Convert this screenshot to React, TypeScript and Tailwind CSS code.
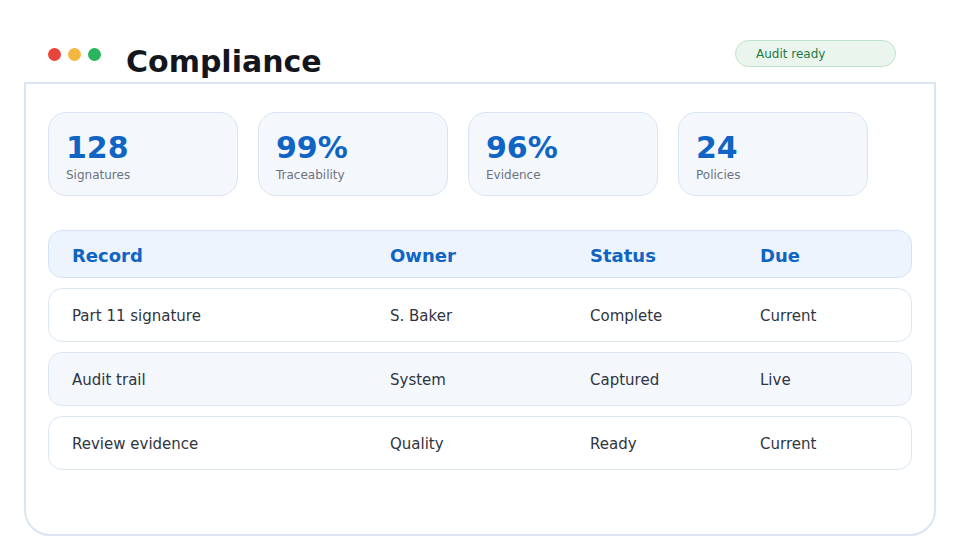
const stats = [
  { value: '128', label: 'Signatures' },
  { value: '99%', label: 'Traceability' },
  { value: '96%', label: 'Evidence' },
  { value: '24', label: 'Policies' },
];

const rows = [
  { record: 'Part 11 signature', owner: 'S. Baker', status: 'Complete', due: 'Current' },
  { record: 'Audit trail', owner: 'System', status: 'Captured', due: 'Live' },
  { record: 'Review evidence', owner: 'Quality', status: 'Ready', due: 'Current' },
];

const cols = 'grid grid-cols-[318px_200px_170px_1fr] items-center';

export default function App() {
  return (
    <div className="h-[560px] w-[960px] bg-white font-['DejaVu_Sans',sans-serif]">
      <header className="flex h-[82px] items-start pr-[64px] pl-[48px]">
        <div className="mt-[48px] flex gap-[7px]">
          <span className="h-[13px] w-[13px] rounded-full bg-[#e8463a]" />
          <span className="h-[13px] w-[13px] rounded-full bg-[#f4b63f]" />
          <span className="h-[13px] w-[13px] rounded-full bg-[#2ab45d]" />
        </div>
        <h1 className="mt-[47px] ml-[25px] text-[30px] leading-[30px] font-bold text-[#13171d]">
          Compliance
        </h1>
        <div className="mt-[40px] ml-auto flex h-[27px] w-[161px] items-center rounded-full border border-[#bde3c9] bg-[#eaf5ee] pl-[20px] text-[12px] text-[#1d7a45]">
          Audit ready
        </div>
      </header>

      <main className="mx-[24px] h-[454px] rounded-b-[26px] border-2 border-[#dae5f1] px-[22px] pt-[28px]">
        <div className="flex gap-[20px]">
          {stats.map((s) => (
            <div
              key={s.label}
              className="h-[84px] w-[190px] rounded-[18px] border border-[#d8e4f1] bg-[#f4f8fc] px-[17px] pt-[20px]"
            >
              <div className="text-[30px] leading-[30px] font-bold text-[#0f64c4]">{s.value}</div>
              <div className="mt-[4px] text-[12px] leading-[16px] text-[#6b7382]">{s.label}</div>
            </div>
          ))}
        </div>

        <div className={`${cols} mt-[34px] h-[48px] rounded-[14px] border border-[#d3e2f4] bg-[#edf4fd] px-[23px] pt-[3px] text-[18px] font-bold text-[#0f64c4]`}>
          <div>Record</div>
          <div>Owner</div>
          <div>Status</div>
          <div>Due</div>
        </div>

        <div className="mt-[10px] flex flex-col gap-[10px]">
          {rows.map((r, i) => (
            <div
              key={r.record}
              className={`${cols} h-[54px] rounded-[14px] border border-[#dbe6f2] px-[23px] pt-[2px] text-[15px] text-[#2f3541] ${
                i % 2 === 1 ? 'bg-[#f4f8fc]' : 'bg-white'
              }`}
            >
              <div>{r.record}</div>
              <div>{r.owner}</div>
              <div>{r.status}</div>
              <div>{r.due}</div>
            </div>
          ))}
        </div>
      </main>
    </div>
  );
}
